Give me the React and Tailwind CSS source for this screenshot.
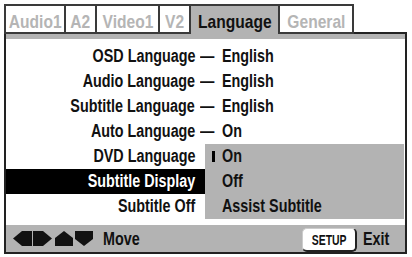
import React from "react";

// Helvetica Condensed look: Liberation Sans squeezed horizontally
function T({ children, o = "origin-left", s = "scale-x-[0.82]" }) {
  return <span className={`inline-block whitespace-nowrap ${s} ${o}`}>{children}</span>;
}

const tabs = [
  { name: "Audio1", cls: "w-[62px] border-l-2 border-b-2 text-[#b5b5b5]" },
  { name: "A2", cls: "w-[31px] border-b-2 text-[#b5b5b5]" },
  { name: "Video1", cls: "w-[63px] border-b-2 text-[#b5b5b5]" },
  { name: "V2", cls: "w-[31px] border-b-2 text-[#b5b5b5]" },
  { name: "Language", cls: "w-[89px] bg-[#b3b3b3] text-[#111]" },
  { name: "General", cls: "w-[74px] border-b-2 text-[#b5b5b5]" },
];

const rows = [
  { label: "OSD Language", value: "English" },
  { label: "Audio Language", value: "English" },
  { label: "Subtitle Language", value: "English" },
  { label: "Auto Language", value: "On" },
  { label: "DVD Language" },
  { label: "Subtitle Display", active: true },
  { label: "Subtitle Off" },
];

const options = ["On", "Off", "Assist Subtitle"];

function Arrows() {
  return (
    <svg width="81" height="16" viewBox="0 0 81 16" fill="#111">
      <polygon points="0,7.5 9,0 19,0 19,15 9,15" />
      <polygon points="20,0 30,0 39,7.5 30,15 20,15" />
      <polygon points="51,0 60,7 60,15 42,15 42,7" />
      <polygon points="62,0 80,0 80,8 71,15 62,8" />
    </svg>
  );
}

export default function App() {
  return (
    <div className="w-[412px] h-[257px] bg-white overflow-hidden font-bold text-[#111] font-[family-name:'Liberation_Sans',Arial,sans-serif]">
      <div className="pl-[4px] pt-[4px] w-[407px]">
        {/* tab strip */}
        <div className="flex h-[30px]">
          {tabs.map((t) => (
            <div
              key={t.name}
              className={`${t.cls} flex justify-center border-t-2 border-r-2 border-[#3a3a3a] text-[19px] leading-[19px] pt-[6px]`}
            >
              <T o="origin-center">{t.name}</T>
            </div>
          ))}
          <div className="flex-1 border-b-2 border-[#222]" />
        </div>

        {/* panel */}
        <div className="border-l-2 border-r-2 border-b-2 border-[#222]">
          <div className="h-[5px] bg-[#b3b3b3]" />
          <div className="relative pt-[4.5px] h-[186px]">
            {rows.map((r) => (
              <div key={r.label} className="flex h-[25px] leading-[25px] text-[17.5px]">
                <div
                  className={`w-[199px] shrink-0 pr-[10px] text-right ${r.active ? "bg-black text-white" : ""}`}
                >
                  <T o="origin-right">{r.label}</T>
                </div>
                {r.value && (
                  <>
                    <span className="-ml-[5px] w-[22px] shrink-0">
                      <T>—</T>
                    </span>
                    <T>{r.value}</T>
                  </>
                )}
              </div>
            ))}

            {/* popup list */}
            <div className="absolute left-[199px] top-[104.5px] w-[199px] h-[75px] bg-[#b3b3b3] text-[17.5px]">
              {options.map((o, i) => (
                <div key={o} className="flex items-center h-[25px] leading-[25px] pl-[7px]">
                  <span className={`w-[3px] h-[11px] mr-[7px] shrink-0 ${i === 0 ? "bg-black" : ""}`} />
                  <T>{o}</T>
                </div>
              ))}
            </div>
          </div>

          {/* bottom bar */}
          <div className="flex items-center h-[27px] bg-[#b3b3b3] text-[17.5px] leading-[20px] pl-[7px]">
            <Arrows />
            <span className="ml-[9px]">
              <T>Move</T>
            </span>
            <div className="flex-1" />
            <div className="self-end h-[24px] w-[55px] rounded-[5px] bg-white border border-[#ccc] border-r-2 border-b-2 border-r-[#222] border-b-[#222] flex items-center justify-center text-[14.5px] leading-[16px]">
              <T o="origin-center" s="scale-x-[0.72]">SETUP</T>
            </div>
            <span className="ml-[6px] w-[32px] mr-[10px]">
              <T>Exit</T>
            </span>
          </div>
        </div>
      </div>
    </div>
  );
}
